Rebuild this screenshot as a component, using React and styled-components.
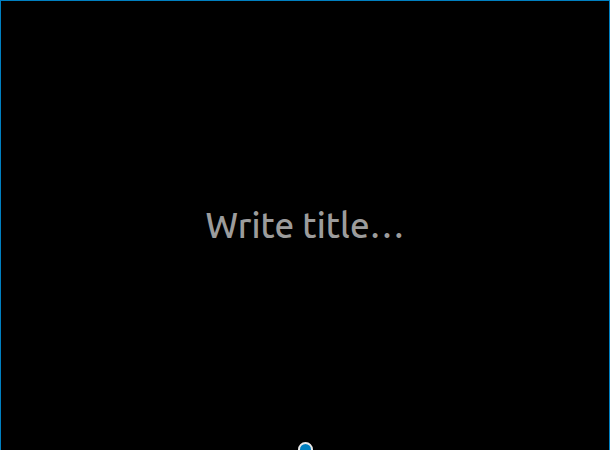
import React from "react";
import styled, { createGlobalStyle } from "styled-components";

const GlobalStyle = createGlobalStyle`
  *, *::before, *::after {
    box-sizing: border-box;
  }
  body {
    margin: 0;
    background: #000;
    overflow: hidden;
  }
`;

const CoverBlock = styled.main`
  position: relative;
  display: flex;
  align-items: center;
  justify-content: center;
  min-height: 100vh;
  padding-bottom: 2px;
  border: 1px solid #007fc0;
  border-bottom: 0;
  background: #000;
`;

const TitleInput = styled.input`
  width: 100%;
  padding: 0 16px;
  border: 0;
  outline: 0;
  background: transparent;
  color: #fff;
  font-family: Ubuntu, "Noto Sans", sans-serif;
  font-size: 35px;
  font-weight: 500;
  line-height: 48px;
  text-align: center;

  &::placeholder {
    color: #9c9c9c;
    opacity: 1;
  }
`;

const ResizeHandle = styled.button`
  position: absolute;
  bottom: -7px;
  left: 50%;
  width: 15px;
  height: 15px;
  margin-left: -7px;
  padding: 0;
  border: 2px solid #e8e8e8;
  border-radius: 50%;
  background: #0080c0;
  cursor: ns-resize;
`;

export default function App() {
  return (
    <>
      <GlobalStyle />
      <CoverBlock>
        <TitleInput type="text" aria-label="Title" placeholder="Write title…" />
        <ResizeHandle type="button" aria-label="Resize cover" />
      </CoverBlock>
    </>
  );
}
